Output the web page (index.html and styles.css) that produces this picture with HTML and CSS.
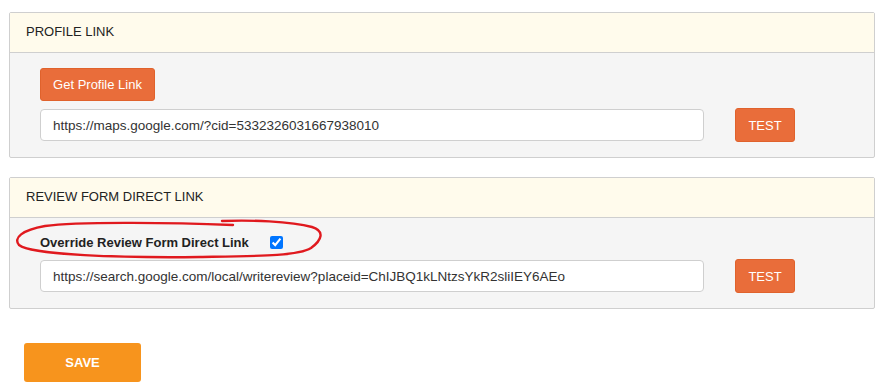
FILE: index.html
```html
<!DOCTYPE html>
<html lang="en">
<head>
  <meta charset="UTF-8">
  <title>Links</title>
  <link rel="stylesheet" href="styles.css">
</head>
<body>

  <!-- Profile link -->
  <div class="panel">
    <div class="panel-heading">PROFILE LINK</div>
    <div class="panel-body">
      <button class="btn btn-orange btn-get">Get Profile Link</button>
      <div class="link-row">
        <input type="text" class="link-input" value="https://maps.google.com/?cid=5332326031667938010">
        <button class="btn btn-orange btn-test">TEST</button>
      </div>
    </div>
  </div>

  <!-- Review form link -->
  <div class="panel">
    <div class="panel-heading">REVIEW FORM DIRECT LINK</div>
    <div class="panel-body body-review">
      <label class="override">
        Override Review Form Direct Link
        <input type="checkbox" checked>
      </label>
      <div class="link-row">
        <input type="text" class="link-input" value="https://search.google.com/local/writereview?placeid=ChIJBQ1kLNtzsYkR2sliIEY6AEo">
        <button class="btn btn-orange btn-test">TEST</button>
      </div>
      <svg class="scribble" width="330" height="45" viewBox="10 219 330 45">
        <path d="M233 226 C 180 224, 80 222, 45 227 C 22 231, 13 239, 19 246 C 32 256, 120 259, 200 258 C 260 257, 298 257, 311 249 C 322 241, 325 232, 312 228 C 290 222, 250 221, 222 222"
              fill="none" stroke="#e0191e" stroke-width="2.4" stroke-linecap="round"/>
      </svg>
    </div>
  </div>

  <button class="btn btn-save">SAVE</button>

</body>
</html>
```

FILE: styles.css
```css
* {
  margin: 0;
  padding: 0;
  box-sizing: border-box;
}

body {
  font-family: 'Liberation Sans', Arial, sans-serif;
  font-size: 13px;
  color: #222;
  background-color: #fff;
  padding: 12px 11px 0 9px;
}

/* Panels */
.panel {
  width: 866px;
  border: 1px solid #cfcfcf;
  border-radius: 2px;
  background-color: #f5f5f5;
  margin-bottom: 19px;
}

.panel-heading {
  height: 40px;
  line-height: 38px;
  padding-left: 16px;
  background-color: #fffbec;
  border-bottom: 1px solid #cfcfcf;
  font-size: 13px;
  color: #222;
}

.panel-body {
  padding: 15px 30px 15px 30px;
}

.body-review {
  position: relative;
  padding-top: 15px;
  padding-bottom: 15px;
}

/* Buttons */
.btn {
  font-family: 'Liberation Sans', Arial, sans-serif;
  border: none;
  border-radius: 3px;
  color: #fff;
  cursor: pointer;
}

.btn-orange {
  background-color: #e96d3a;
  border: 1px solid #e0622c;
  font-size: 13px;
}

.btn-get {
  width: 115px;
  height: 33px;
  display: block;
  margin-bottom: 7px;
}

.btn-test {
  width: 60px;
  height: 34px;
  margin-left: 31px;
}

.btn-save {
  display: block;
  width: 117px;
  height: 39px;
  margin: 34px 0 0 15px;
  background-color: #f7941d;
  font-size: 13px;
  font-weight: bold;
}

/* Link rows */
.link-row {
  display: flex;
  align-items: center;
}

.link-input {
  width: 664px;
  height: 32px;
  padding: 0 12px;
  border: 1px solid #cfcfcf;
  border-radius: 4px;
  background-color: #fff;
  font-family: 'Liberation Sans', Arial, sans-serif;
  font-size: 13.5px;
  color: #333;
}

.override {
  display: flex;
  align-items: center;
  height: 18px;
  margin-bottom: 8px;
  font-weight: bold;
  color: #222;
}

.override input {
  width: 13px;
  height: 13px;
  margin-left: 21px;
  accent-color: #0075ff;
}

/* Hand drawn mark over the label */
.scribble {
  position: absolute;
  left: 0;
  top: 0;
  pointer-events: none;
}
```
